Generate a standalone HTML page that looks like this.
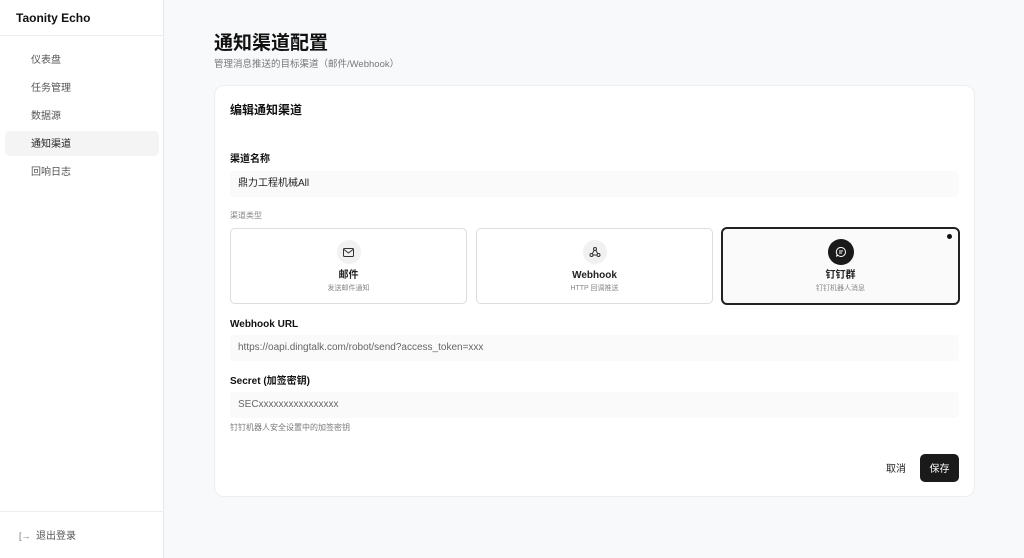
<!DOCTYPE html>
<html><head><meta charset="utf-8"><style>
*{box-sizing:border-box;margin:0;padding:0}
body{width:1024px;height:558px;overflow:hidden;background:#f8f9fa;font-family:"Liberation Sans","Noto Sans CJK SC",sans-serif;color:#111;position:relative;line-height:1.2}
.abs{position:absolute}
.side{left:0;top:0;width:164px;height:558px;background:#fff;border-right:1px solid #e8e8e8}
.nav{position:absolute;left:31px;font-size:10px;color:#555}
.in{position:absolute;left:230px;width:729px;height:26px;background:#fafafa;border-radius:4px;font-size:10px;color:#666;padding-left:8px;line-height:26px}
.opt{position:absolute;top:228px;width:237px;height:76px;border:1px solid #ddd;border-radius:5px;background:#fff;text-align:center}
.ic{width:24px;height:24px;border-radius:50%;background:#f1f1f1;margin:11px auto 0;display:flex;align-items:center;justify-content:center}
.t{font-size:10px;font-weight:bold;margin-top:6px;color:#222}
.s{font-size:7px;color:#888;margin-top:3px}
.lb{position:absolute;left:230px;font-size:10px;font-weight:bold}
</style></head><body>
<div class="abs side">
 <div class="abs" style="left:16px;top:11px;font-size:12px;font-weight:bold">Taonity Echo</div>
 <div class="abs" style="left:0;top:35px;width:164px;border-top:1px solid #eee"></div>
 <div class="nav" style="top:55px">仪表盘</div>
 <div class="nav" style="top:83px">任务管理</div>
 <div class="nav" style="top:111px">数据源</div>
 <div class="abs" style="left:5px;top:131px;width:154px;height:25px;background:#f4f4f4;border-radius:5px"></div>
 <div class="nav" style="top:139px;color:#222">通知渠道</div>
 <div class="nav" style="top:167px">回响日志</div>
 <div class="abs" style="left:0;top:511px;width:164px;border-top:1px solid #eee"></div>
 <div class="abs" style="left:19px;top:531px;font-size:9px;color:#777">[→</div>
 <div class="nav" style="left:36px;top:531px">退出登录</div>
</div>
<div class="abs" style="left:214px;top:33px;font-size:19px;font-weight:bold">通知渠道配置</div>
<div class="abs" style="left:214px;top:59px;font-size:9.5px;color:#777">管理消息推送的目标渠道（邮件/Webhook）</div>
<div class="abs" style="left:214px;top:85px;width:761px;height:412px;background:#fff;border:1px solid #eee;border-radius:10px"></div>
<div class="abs" style="left:230px;top:103px;font-size:12px;font-weight:bold">编辑通知渠道</div>
<div class="lb" style="top:154px">渠道名称</div>
<div class="in" style="top:171px;color:#222">鼎力工程机械All</div>
<div class="abs" style="left:230px;top:211px;font-size:8px;color:#888">渠道类型</div>
<div class="opt" style="left:230px"><div class="ic"><svg width="11" height="9" viewBox="0 0 11 9"><rect x=".5" y=".5" width="10" height="8" rx="1" fill="none" stroke="#333"/><path d="M1 1.5l4.5 3.5 4.5-3.5" fill="none" stroke="#333"/></svg></div><div class="t">邮件</div><div class="s">发送邮件通知</div></div>
<div class="opt" style="left:476px"><div class="ic"><svg width="12" height="12" viewBox="0 0 12 12" fill="none" stroke="#333"><circle cx="6" cy="3" r="1.5"/><circle cx="2.5" cy="9" r="1.5"/><circle cx="9.5" cy="9" r="1.5"/><path d="M5.2 4.3L3.2 7.7M6.8 4.3l2 3.4M4 9h4"/></svg></div><div class="t">Webhook</div><div class="s">HTTP 回调推送</div></div>
<div class="opt" style="left:722px;border:1px solid #222;box-shadow:0 0 0 1px #222;background:#fafafa"><div class="ic" style="background:#1a1a1a;width:26px;height:26px;margin-top:10px"><svg width="12" height="12" viewBox="0 0 12 12" fill="none" stroke="#fff"><path d="M6 1.5a4.5 4.5 0 1 1-3.2 7.7L1.5 10.5l.6-2A4.5 4.5 0 0 1 6 1.5z"/><path d="M4 5h4M4 7h3"/></svg></div><div class="t" style="margin-top:5px">钉钉群</div><div class="s">钉钉机器人消息</div><div class="abs" style="right:6px;top:5px;width:5px;height:5px;border-radius:50%;background:#111"></div></div>
<div class="lb" style="top:319px">Webhook URL</div>
<div class="in" style="top:335px">https://oapi.dingtalk.com/robot/send?access_token=xxx</div>
<div class="lb" style="top:376px">Secret (加签密钥)</div>
<div class="in" style="top:392px">SECxxxxxxxxxxxxxxxx</div>
<div class="abs" style="left:230px;top:423px;font-size:8px;color:#777">钉钉机器人安全设置中的加签密钥</div>
<div class="abs" style="left:886px;top:464px;font-size:10px;color:#222">取消</div>
<div class="abs" style="left:920px;top:454px;width:39px;height:28px;background:#1a1a1a;border-radius:5px;color:#fff;font-size:10px;display:flex;align-items:center;justify-content:center;padding-top:4px">保存</div>
</body></html>
